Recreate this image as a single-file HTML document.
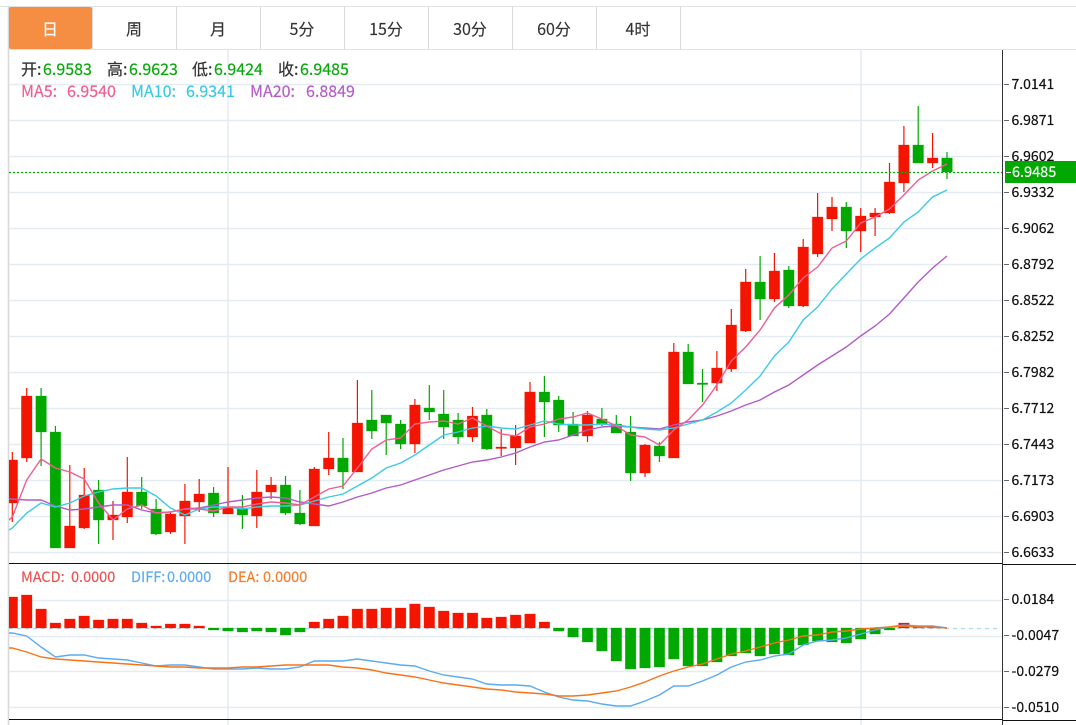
<!DOCTYPE html>
<html><head><meta charset="utf-8"><style>
html,body{margin:0;padding:0;background:#fff;width:1076px;height:725px;overflow:hidden}
svg{display:block}
text{font-family:"Noto Sans CJK SC","Liberation Sans",sans-serif}
.t{font-size:16px;fill:#333;stroke:#333;stroke-width:.15;text-anchor:middle}
.a{font-size:14px;fill:#111;stroke:#111;stroke-width:.2}
.h{font-size:16px;fill:currentColor;stroke:currentColor;stroke-width:.2}
.m{font-size:14.5px;fill:currentColor;stroke:currentColor;stroke-width:.15}
.r{fill:#f41500;stroke:#f41500;stroke-opacity:.4;stroke-width:.7}
.g{fill:#00a800;stroke:#00a800;stroke-opacity:.4;stroke-width:.7}
</style></head><body>
<svg width="1076" height="725" viewBox="0 0 1076 725" xmlns="http://www.w3.org/2000/svg">
<defs><clipPath id="c"><rect x="9" y="50" width="993.5" height="513"/></clipPath><clipPath id="d"><rect x="9" y="564" width="993.5" height="155"/></clipPath></defs>
<!-- tabs -->
<path d="M0 6.5H1076M8 49.5H1076" stroke="#dfe1e3" fill="none"/>
<path d="M8.5 6V725" stroke="#d8d8d8" stroke-width="1.6" fill="none"/>
<path d="M92.5 7V49M176.5 7V49M260.5 7V49M344.5 7V49M428.5 7V49M512.5 7V49M596.5 7V49M680.5 7V49" stroke="#dadada" fill="none"/>
<rect x="9" y="7" width="83" height="42" rx="2" fill="#f58d42"/>
<text class="t" x="50" y="35" style="fill:#fff;stroke:#fff">日</text>
<text class="t" x="134" y="35">周</text>
<text class="t" x="218" y="35">月</text>
<text class="t" x="302" y="35">5分</text>
<text class="t" x="386" y="35">15分</text>
<text class="t" x="470" y="35">30分</text>
<text class="t" x="554" y="35">60分</text>
<text class="t" x="638" y="35">4时</text>
<!-- grid -->
<path d="M9 84.5H1003M9 120.5H1003M9 156.5H1003M9 192.5H1003M9 228.5H1003M9 264.5H1003M9 300.5H1003M9 336.5H1003M9 372.5H1003M9 408.5H1003M9 444.5H1003M9 480.5H1003M9 516.5H1003M9 552.5H1003M9 600.5H1003M9 636.5H1003M9 671.5H1003M9 707.5H1003" stroke="#e4ebf2" stroke-width="1.6" fill="none"/>
<path d="M228 50V725M861 50V725" stroke="#e4ecf3" stroke-width="1.6" fill="none"/>
<g clip-path="url(#c)">
<!-- wicks -->
<path fill="none" stroke="#f41500" stroke-width="1.2" d="M12.3 452V522M26.7 388V462M69.8 465V548M84.2 468V529M113 501V540M127.3 457V523M170.5 512V534M184.9 484V544M199.2 479V512M228 467V514M256.8 470V528M271.1 477V499M314.3 467V526M328.7 432V475M357.4 380V472M414.9 399V453M472.5 407V442M501.2 429V456M515.6 425V465M530 382V443M587.5 411V442M645 444V477M673.8 343V458M716.9 351V391M731.3 309V372M745.7 269V332M774.4 253V302M803.2 239V307M817.6 193V257M832 197V231M860.7 208V252M875.1 208V236M889.5 163V214M903.9 126V192M932.6 133V168"/>
<path fill="none" stroke="#00a800" stroke-width="1.2" d="M41.1 388V466M55.4 426V548M98.6 480V544M141.7 477V509M156.1 499V535M213.6 487V517M242.4 495V529M285.5 476V515M299.9 490V525M343 438V489M371.8 390V439M386.2 415V455M400.6 420V449M429.3 385V420M443.7 390V439M458.1 413V444M486.8 409V450M544.4 376V437M558.7 396V432M573.1 412V436M601.9 408V426M616.3 415V433M630.6 416V481M659.4 442V462M688.2 344V384M702.5 369V402M760.1 256V320M788.8 266V308M846.3 202V248M918.2 106V163M947 152V179"/>
<!-- bodies -->
<path class="r" d="M7 460h10.6V503h-10.6zM21.4 396h10.6V458h-10.6zM64.5 526h10.6V548h-10.6zM78.9 495h10.6V528h-10.6zM107.7 515h10.6V520h-10.6zM122 492h10.6V517h-10.6zM165.2 514h10.6V532h-10.6zM179.6 501h10.6V516h-10.6zM193.9 494h10.6V502h-10.6zM222.7 507h10.6V514h-10.6zM251.5 492h10.6V516h-10.6zM265.8 485h10.6V492h-10.6zM309 469h10.6V526h-10.6zM323.4 458h10.6V469h-10.6zM352.1 423h10.6V472h-10.6zM409.6 405h10.6V444h-10.6zM467.2 416h10.6V437h-10.6zM495.9 447h10.6V448.5h-10.6zM510.3 436h10.6V448h-10.6zM524.7 392h10.6V443h-10.6zM582.2 415h10.6V436h-10.6zM639.7 445h10.6V473h-10.6zM668.5 352h10.6V458h-10.6zM711.6 368h10.6V383h-10.6zM726 325h10.6V369h-10.6zM740.4 282h10.6V331h-10.6zM769.1 271h10.6V299h-10.6zM797.9 247h10.6V306h-10.6zM812.3 217h10.6V254h-10.6zM826.7 207h10.6V219h-10.6zM855.4 216h10.6V231h-10.6zM869.8 213h10.6V217h-10.6zM884.2 182h10.6V213h-10.6zM898.6 145h10.6V183h-10.6zM927.3 158h10.6V163h-10.6z"/>
<path class="g" d="M35.8 396h10.6V432h-10.6zM50.1 432h10.6V548h-10.6zM93.3 490h10.6V520h-10.6zM136.4 492h10.6V506h-10.6zM150.8 509h10.6V534h-10.6zM208.3 493h10.6V513h-10.6zM237.1 508h10.6V515h-10.6zM280.2 485h10.6V513h-10.6zM294.6 513h10.6V524h-10.6zM337.7 458h10.6V472h-10.6zM366.5 420h10.6V431h-10.6zM380.9 415h10.6V423h-10.6zM395.3 424h10.6V444h-10.6zM424 408h10.6V412h-10.6zM438.4 414h10.6V427h-10.6zM452.8 420h10.6V437h-10.6zM481.5 415h10.6V449h-10.6zM539.1 392h10.6V402h-10.6zM553.4 400h10.6V425h-10.6zM567.8 424h10.6V436h-10.6zM596.6 419h10.6V424h-10.6zM611 424h10.6V433h-10.6zM625.3 432h10.6V473h-10.6zM654.1 446h10.6V456h-10.6zM682.9 352h10.6V384h-10.6zM697.2 383h10.6V384.5h-10.6zM754.8 282h10.6V299h-10.6zM783.5 270h10.6V306h-10.6zM841 207h10.6V231h-10.6zM912.9 145h10.6V163h-10.6zM941.7 158h10.6V172h-10.6z"/>
<!-- MA lines -->
<polyline fill="none" stroke="#b25bc8" stroke-width="1.4" points="9,499 12.3,499 26.7,500 41.1,500 55.4,506 69.8,510 84.2,509 98.6,507 113,505 127.3,505 141.7,510 156.1,513 170.5,512 184.9,509 199.2,508 213.6,505 228,502 242.4,500 256.8,498 271.1,497 285.5,498 299.9,502 314.3,504 328.7,506 343,502 357.4,497 371.8,493 386.2,488 400.6,485 414.9,480 429.3,475 443.7,470 458.1,466 472.5,462 486.8,460 501.2,457 515.6,453 530,447 544.4,442 558.7,440 573.1,435 587.5,430 601.9,427 616.3,426 630.6,427 645,428 659.4,429 673.8,425 688.2,422 702.5,420 716.9,416 731.3,411 745.7,405 760.1,400 774.4,392 788.8,385 803.2,375 817.6,365 832,356 846.3,347 860.7,336 875.1,326 889.5,314 903.9,298 918.2,282 932.6,268 947,256"/>
<polyline fill="none" stroke="#3ccbe6" stroke-width="1.4" points="9,530 12.3,528 26.7,513 41.1,503 55.4,507 69.8,503 84.2,496 98.6,492 113,489 127.3,488 141.7,488 156.1,496 170.5,508 184.9,515 199.2,509 213.6,507 228,507 242.4,509 256.8,507 271.1,506 285.5,506 299.9,505 314.3,501 328.7,497 343,494 357.4,486 371.8,478 386.2,468 400.6,463 414.9,455 429.3,445 443.7,435 458.1,432 472.5,428 486.8,426 501.2,428 515.6,429 530,425 544.4,421 558.7,424 573.1,425 587.5,425 601.9,424 616.3,425 630.6,427 645,429 659.4,430 673.8,428 688.2,424 702.5,420 716.9,412 731.3,403 745.7,390 760.1,376 774.4,356 788.8,342 803.2,320 817.6,307 832,289 846.3,274 860.7,259 875.1,248 889.5,238 903.9,222 918.2,212 932.6,197 947,190"/>
<polyline fill="none" stroke="#ef5f8f" stroke-width="1.4" points="9,520 12.3,517 26.7,480 41.1,459 55.4,468 69.8,472 84.2,479 98.6,503 113,520 127.3,509 141.7,505 156.1,513 170.5,512 184.9,509 199.2,509 213.6,511 228,507 242.4,507 256.8,504 271.1,502 285.5,503 299.9,505 314.3,497 328.7,489 343,486 357.4,468 371.8,449 386.2,440 400.6,438 414.9,424 429.3,422 443.7,421 458.1,424 472.5,418 486.8,426 501.2,434 515.6,436 530,427 544.4,424 558.7,419 573.1,417 587.5,413 601.9,419 616.3,426 630.6,435 645,437 659.4,445 673.8,430 688.2,420 702.5,405 716.9,385 731.3,361 745.7,347 760.1,330 774.4,308 788.8,295 803.2,278 817.6,267 832,248 846.3,241 860.7,223 875.1,217 889.5,209 903.9,195 918.2,180 932.6,171 947,164"/>
</g>
<!-- dotted current price -->
<path d="M9 172.5H1003" stroke="#00b000" stroke-width="1.2" stroke-dasharray="2 2" fill="none"/>
<g clip-path="url(#d)">
<path d="M9 628.5H1000" stroke="#a9dcf0" stroke-width="1.2" stroke-dasharray="4 4" fill="none"/>
<path class="r" d="M7 597h10.6V628h-10.6zM21.4 595h10.6V628h-10.6zM35.8 609h10.6V628h-10.6zM50.1 623h10.6V628h-10.6zM64.5 619h10.6V628h-10.6zM78.9 616h10.6V628h-10.6zM93.3 620h10.6V628h-10.6zM107.7 619h10.6V628h-10.6zM122 619h10.6V628h-10.6zM136.4 623h10.6V628h-10.6zM150.8 626h10.6V628h-10.6zM165.2 624h10.6V628h-10.6zM179.6 624h10.6V628h-10.6zM193.9 626h10.6V628h-10.6zM309 622h10.6V628h-10.6zM323.4 619h10.6V628h-10.6zM337.7 616h10.6V628h-10.6zM352.1 609h10.6V628h-10.6zM366.5 609h10.6V628h-10.6zM380.9 608h10.6V628h-10.6zM395.3 608h10.6V628h-10.6zM409.6 604h10.6V628h-10.6zM424 607h10.6V628h-10.6zM438.4 611h10.6V628h-10.6zM452.8 613h10.6V628h-10.6zM467.2 613h10.6V628h-10.6zM481.5 618h10.6V628h-10.6zM495.9 617h10.6V628h-10.6zM510.3 615h10.6V628h-10.6zM524.7 614h10.6V628h-10.6zM539.1 622h10.6V628h-10.6zM898.6 623h10.6V628h-10.6zM912.9 626h10.6V628h-10.6zM927.3 627h10.6V628h-10.6z"/>
<path class="g" d="M208.3 628h10.6V630h-10.6zM222.7 628h10.6V631h-10.6zM237.1 628h10.6V632h-10.6zM251.5 628h10.6V631h-10.6zM265.8 628h10.6V632h-10.6zM280.2 628h10.6V635h-10.6zM294.6 628h10.6V632h-10.6zM553.4 628h10.6V631h-10.6zM567.8 628h10.6V637h-10.6zM582.2 628h10.6V642h-10.6zM596.6 628h10.6V651h-10.6zM611 628h10.6V661h-10.6zM625.3 628h10.6V669h-10.6zM639.7 628h10.6V668h-10.6zM654.1 628h10.6V667h-10.6zM668.5 628h10.6V659h-10.6zM682.9 628h10.6V666h-10.6zM697.2 628h10.6V666h-10.6zM711.6 628h10.6V662h-10.6zM726 628h10.6V656h-10.6zM740.4 628h10.6V653h-10.6zM754.8 628h10.6V656h-10.6zM769.1 628h10.6V654h-10.6zM783.5 628h10.6V655h-10.6zM797.9 628h10.6V645h-10.6zM812.3 628h10.6V641h-10.6zM826.7 628h10.6V642h-10.6zM841 628h10.6V643h-10.6zM855.4 628h10.6V639h-10.6zM869.8 628h10.6V634h-10.6zM884.2 628h10.6V630h-10.6z"/>
<polyline fill="none" stroke="#5aabf5" stroke-width="1.4" points="9,633 12.3,633 26.7,636 41.1,647 55.4,657 69.8,655 84.2,655 98.6,658 113,659 127.3,660 141.7,663 156.1,666 170.5,665 184.9,665 199.2,667 213.6,669 228,669 242.4,669 256.8,668 271.1,669 285.5,669 299.9,667 314.3,661 328.7,661 343,661 357.4,659 371.8,661 386.2,663 400.6,665 414.9,666 429.3,671 443.7,675 458.1,677 472.5,679 486.8,684 501.2,685 515.6,685 530,686 544.4,692 558.7,697 573.1,700 587.5,701 601.9,704 616.3,706 630.6,706 645,701 659.4,695 673.8,686 688.2,686 702.5,681 716.9,675 731.3,667 745.7,662 760.1,660 774.4,656 788.8,654 803.2,645 817.6,641 832,640 846.3,638 860.7,634 875.1,630 889.5,627 903.9,625 918.2,626 932.6,626 947,628"/>
<polyline fill="none" stroke="#f97316" stroke-width="1.4" points="9,648 12.3,648 26.7,652 41.1,657 55.4,659 69.8,660 84.2,661 98.6,662 113,663 127.3,664 141.7,665 156.1,666 170.5,667 184.9,667 199.2,668 213.6,668 228,668 242.4,667 256.8,667 271.1,666 285.5,665 299.9,665 314.3,665 328.7,665 343,667 357.4,668 371.8,670 386.2,673 400.6,675 414.9,677 429.3,680 443.7,683 458.1,685 472.5,687 486.8,689 501.2,690 515.6,692 530,693 544.4,694 558.7,696 573.1,696 587.5,695 601.9,693 616.3,691 630.6,687 645,682 659.4,676 673.8,671 688.2,667 702.5,664 716.9,659 731.3,654 745.7,651 760.1,647 774.4,643 788.8,640 803.2,636 817.6,635 832,632 846.3,631 860.7,629 875.1,628 889.5,627 903.9,626 918.2,627 932.6,627 947,628"/>
</g>
<!-- axes -->
<path d="M9 563.5H1003M1003 564.5H1076M9 719.5H1003M1003 720.5H1076" stroke="#111" fill="none"/>
<path d="M1002.5 50V725" stroke="#333" fill="none"/>
<path d="M1004 84.5h5M1004 120.5h5M1004 156.5h5M1004 192.5h5M1004 228.5h5M1004 264.5h5M1004 300.5h5M1004 336.5h5M1004 372.5h5M1004 408.5h5M1004 444.5h5M1004 480.5h5M1004 516.5h5M1004 552.5h5M1004 599.5h5M1004 635.5h5M1004 671.5h5M1004 707.5h5" stroke="#666" fill="none"/>
<text class="a" x="1011.5" y="89">7.0141</text>
<text class="a" x="1011.5" y="125">6.9871</text>
<text class="a" x="1011.5" y="161">6.9602</text>
<text class="a" x="1011.5" y="197">6.9332</text>
<text class="a" x="1011.5" y="233">6.9062</text>
<text class="a" x="1011.5" y="269">6.8792</text>
<text class="a" x="1011.5" y="305">6.8522</text>
<text class="a" x="1011.5" y="341">6.8252</text>
<text class="a" x="1011.5" y="377">6.7982</text>
<text class="a" x="1011.5" y="413">6.7712</text>
<text class="a" x="1011.5" y="449">6.7443</text>
<text class="a" x="1011.5" y="485">6.7173</text>
<text class="a" x="1011.5" y="521">6.6903</text>
<text class="a" x="1011.5" y="557">6.6633</text>
<text class="a" x="1011.5" y="604">0.0184</text>
<text class="a" x="1011.5" y="640">-0.0047</text>
<text class="a" x="1011.5" y="676">-0.0279</text>
<text class="a" x="1011.5" y="712">-0.0510</text>
<rect x="1005" y="161" width="71" height="22" fill="#00a800"/>
<path d="M1006 172.5h5" stroke="#fff"/>
<text class="a" x="1012" y="177" style="fill:#fff;stroke:#fff;font-size:14.5px">6.9485</text>
<!-- header text -->
<text class="h" x="21" y="75" style="color:#333">开:</text><text class="h" x="43" y="75" style="color:#0aa80e">6.9583</text>
<text class="h" x="107" y="75" style="color:#333">高:</text><text class="h" x="129" y="75" style="color:#0aa80e">6.9623</text>
<text class="h" x="192" y="75" style="color:#333">低:</text><text class="h" x="214" y="75" style="color:#0aa80e">6.9424</text>
<text class="h" x="278" y="75" style="color:#333">收:</text><text class="h" x="300" y="75" style="color:#0aa80e">6.9485</text>
<text class="h" x="21" y="97" style="color:#ef5f8f">MA5:</text><text class="h" x="67" y="97" style="color:#ef5f8f">6.9540</text>
<text class="h" x="131" y="97" style="color:#38c9e4">MA10:</text><text class="h" x="186" y="97" style="color:#38c9e4">6.9341</text>
<text class="h" x="250" y="97" style="color:#b45cc8">MA20:</text><text class="h" x="306" y="97" style="color:#b45cc8">6.8849</text>
<text class="m" x="21" y="582" style="color:#f05050">MACD:</text><text class="m" x="71" y="582" style="color:#f05050">0.0000</text>
<text class="m" x="131" y="582" style="color:#5aabf5">DIFF:</text><text class="m" x="167" y="582" style="color:#5aabf5">0.0000</text>
<text class="m" x="228" y="582" style="color:#f97b28">DEA:</text><text class="m" x="263" y="582" style="color:#f97b28">0.0000</text>
</svg>
</body></html>
